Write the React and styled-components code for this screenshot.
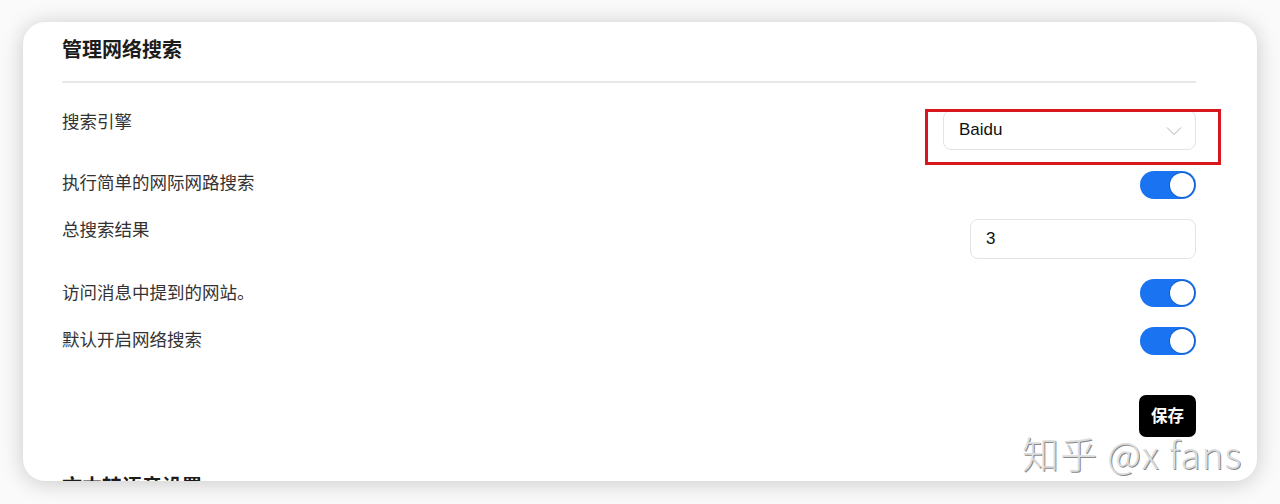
import React from 'react'
import styled, { createGlobalStyle } from 'styled-components'

const GlobalStyle = createGlobalStyle`
  html, body {
    margin: 0;
    padding: 0;
    background: #ffffff;
    font-family: Inter, "Noto Sans CJK SC", "Liberation Sans", sans-serif;
  }
`

const Page = styled.div`
  position: relative;
  width: 1280px;
  height: 504px;
  padding: 22px 23px 0 23px;
  box-sizing: border-box;
  background: #fafafa;
  overflow: hidden;
`

const Card = styled.div`
  height: 459px;
  background: #fff;
  border-radius: 22px;
  box-shadow: 0 2px 22px rgba(0, 0, 0, 0.2);
  overflow: hidden;
  padding: 14px 61px 0 39px;
  box-sizing: border-box;
`

const Heading = styled.h2`
  margin: 0;
  font-size: 20px;
  line-height: 26px;
  font-weight: 700;
  color: #1c1c1c;
  font-family: "Noto Sans CJK SC", sans-serif;
  padding: 0 0 19px;
  border-bottom: 2px solid #e8e8e8;
`

const Rows = styled.div`
  display: flex;
  flex-direction: column;
  gap: 20px;
  margin-top: 27px;
`

const Row = styled.div`
  display: flex;
  justify-content: space-between;
  align-items: flex-start;
`

const Label = styled.span`
  font-size: 17.5px;
  line-height: 24px;
  color: #333;
  font-family: "Noto Sans CJK SC", sans-serif;
  margin-top: ${(p) => p.$shift || 0}px;
`

const SelectWrap = styled.div`
  position: relative;
  width: 253px;
  margin-bottom: 1px;
`

const SelectBox = styled.div`
  height: 40px;
  box-sizing: border-box;
  border: 1px solid #e3e3e3;
  border-radius: 8px;
  display: flex;
  align-items: center;
  justify-content: space-between;
  padding: 0 13px 0 15px;
  font-family: "Liberation Sans", Arial, sans-serif;
  font-size: 17px;
  color: #111;
`

const Chevron = styled.svg`
  width: 16px;
  height: 10px;
  margin-top: 1px;
`

const Highlight = styled.div`
  position: absolute;
  left: -18px;
  top: -1px;
  width: 296px;
  height: 56px;
  box-sizing: border-box;
  border: 3px solid #d7161e;
  pointer-events: none;
`

const Input = styled.div`
  width: 226px;
  height: 40px;
  box-sizing: border-box;
  border: 1px solid #e3e3e3;
  border-radius: 8px;
  display: flex;
  align-items: center;
  padding: 0 15px;
  font-family: "Liberation Sans", Arial, sans-serif;
  font-size: 17px;
  color: #111;
`

const Toggle = styled.div`
  width: 56px;
  height: 28px;
  border-radius: 14px;
  background: ${(p) => (p.$on ? '#1a73f0' : '#d0d0d0')};
  position: relative;
  &:after {
    content: '';
    position: absolute;
    top: 2px;
    left: ${(p) => (p.$on ? '30px' : '2px')};
    width: 24px;
    height: 24px;
    border-radius: 50%;
    background: #fff;
    box-shadow: 0 0 0 1px rgba(0, 60, 160, 0.35);
  }
`

const Actions = styled.div`
  display: flex;
  justify-content: flex-end;
  margin-top: 40px;
`

const SaveButton = styled.button`
  width: 57px;
  height: 42px;
  border: none;
  border-radius: 7px;
  background: #000;
  color: #fff;
  font-size: 16.5px;
  font-weight: 700;
  font-family: "Noto Sans CJK SC", sans-serif;
  padding: 0 0 3px;
`

const NextHeading = styled.h2`
  margin: 36px 0 0;
  font-size: 20px;
  line-height: 26px;
  font-weight: 700;
  color: #1c1c1c;
  font-family: "Noto Sans CJK SC", sans-serif;
`

const Watermark = styled.div`
  position: absolute;
  left: 1022px;
  top: 426px;
  font-size: 37px;
  font-weight: 300;
  letter-spacing: 1px;
  color: #dcdcdc;
  text-shadow: 1px 1px 0 #8a8a8a;
  font-family: "Noto Sans CJK SC", "Liberation Sans", sans-serif;
  white-space: nowrap;
`

export default function App() {
  return (
    <>
      <GlobalStyle />
      <Page>
        <Card>
          <Heading>管理网络搜索</Heading>
          <Rows>
            <Row>
              <Label $shift={-1}>搜索引擎</Label>
              <SelectWrap>
                <SelectBox>
                  <span>Baidu</span>
                  <Chevron viewBox="0 0 16 10">
                    <polyline points="1,1.5 8,8.5 15,1.5" fill="none" stroke="#b0b0b0" strokeWidth="1" />
                  </Chevron>
                </SelectBox>
                <Highlight />
              </SelectWrap>
            </Row>
            <Row>
              <Label $shift={-1}>执行简单的网际网路搜索</Label>
              <Toggle $on />
            </Row>
            <Row>
              <Label $shift={-2}>总搜索结果</Label>
              <Input>3</Input>
            </Row>
            <Row>
              <Label $shift={1}>访问消息中提到的网站。</Label>
              <Toggle $on />
            </Row>
            <Row>
              <Label>默认开启网络搜索</Label>
              <Toggle $on />
            </Row>
          </Rows>
          <Actions>
            <SaveButton>保存</SaveButton>
          </Actions>
          <NextHeading>文本转语音设置</NextHeading>
        </Card>
        <Watermark>知乎 @x fans</Watermark>
      </Page>
    </>
  )
}
